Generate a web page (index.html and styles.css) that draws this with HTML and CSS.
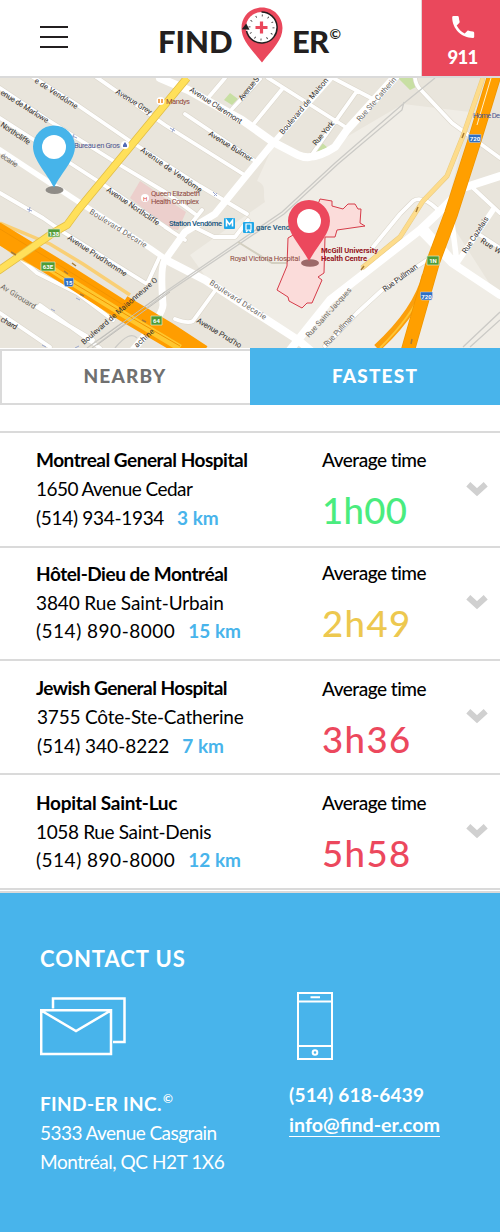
FILE: index.html
```html
<!DOCTYPE html>
<html lang="en">
<head>
<meta charset="utf-8">
<title>FIND-ER</title>
<meta name="viewport" content="width=device-width">
<link rel="stylesheet" href="styles.css">
</head>
<body>
<header class="header">
  <button class="menu" aria-label="Menu"><span></span><span></span><span></span></button>
  <div class="logo">
    <span class="logo-find">FIND</span>
    <svg class="logo-pin" width="42" height="56" viewBox="0 0 42 56">
      <path d="M21 .5C9.500.5.500 9.500.5 21c0 12 9 20 20.500 34.500C32.500 41 41.500 33 41.500 21 41.500 9.500 32.500.5 21 .5z" fill="#ea485c"/>
      <circle cx="20.500" cy="20.500" r="15.500" fill="#fff"/>
      <path d="M20.500 5a15.500 15.500 0 1 1-15 19" fill="none" stroke="#231f20" stroke-width="1.500"/>
      <path d="M.8 22.200 5.200 16.500l3.400 6.300z" fill="#231f20"/>
      <circle cx="20.500" cy="20.500" r="12" fill="none" stroke="#231f20" stroke-width="2" stroke-dasharray=".8 5.483"/>
      <path d="M20.500 14.500v12M14.500 20.500h12" stroke="#ea485c" stroke-width="3.200"/>
    </svg>
    <span class="logo-er">ER</span><span class="logo-copy">©</span>
  </div>
  <a class="emergency">
    <svg width="24" height="24" viewBox="0 0 24 24"><path d="M1.200 2.300Q1.200 1 2.500 1h4q1.200 0 1.300 1.200c.1 1.600.4 3 .8 4.400.2.600 0 1.100-.4 1.500L5.700 10.600c2 3.700 4.300 6 8 8l2.500-2.600c.4-.4.9-.5 1.500-.3 1.400.4 2.800.6 4.300.7q1.200.1 1.200 1.300v4q0 1.300-1.300 1.300C10.500 23 1.200 13.800 1.200 2.300z" fill="#fff"/></svg>
    <span>911</span>
  </a>
</header>

<svg class="map" width="500" height="270" viewBox="0 78 500 270">
  <rect y="78" width="500" height="270" fill="#e9e5dc"/>
  <path d="M273 146 312 161 350 135 403 104 470 112 445 214 500 300V348H310L215 290 190 255 265 202C262 192 268 186 257 181z" fill="#f0ede6"/>
  <path d="M140 181 130 198 168 228 178 230 186 212 165 198z" fill="#eccfcc"/>
  <path d="M230 93 238 99 232 105 224 100zM320 141 328 148 312 153zM398 78H413L418 86 410 90z" fill="#c8dfa3"/>

  <g class="road-edge">
    <path d="M25 72 76 104 130 141 200 186 247 214M92 74 165 125 243 174M0 88 48 120 120 165 165 192 195 214M0 118 70 163 107 187 170 230M0 193 43 218 63 232 147 284M185 114 255 161M225 78 208 98M232 109 260 79M268 78 347 128M283 88 252 126M333 78 373 99M357 91 313 153M415 78Q416 86 421 90L452 123 500 158M473 188 500 213M477 233 500 248M430 258 382 290 357 313 325 346M20 258 37 273 77 293 113 320M100 348 40 305M37 307 93 340M0 313 50 347M217 288 193 321Q188 324 175 319M400 214 413 201Q422 195 437 209M400 214 373 247M165 227 185 240M202 210 190 225 214 237H235L248 220M147 284 160 256"/>
  </g>
  <g class="road">
    <path d="M25 72 76 104 130 141 200 186 247 214M92 74 165 125 243 174M0 88 48 120 120 165 165 192 195 214M0 118 70 163 107 187 170 230M0 193 43 218 63 232 147 284M185 114 255 161M225 78 208 98M232 109 260 79M268 78 347 128M283 88 252 126M333 78 373 99M357 91 313 153M415 78Q416 86 421 90L452 123 500 158M473 188 500 213M477 233 500 248M430 258 382 290 357 313 325 346M20 258 37 273 77 293 113 320M100 348 40 305M37 307 93 340M0 313 50 347M217 288 193 321Q188 324 175 319M400 214 413 201Q422 195 437 209M400 214 373 247M165 227 185 240M202 210 190 225 214 237H235L248 220M147 284 160 256"/>
    <path class="w5" d="M0 150 50 183 88 208 150 248 170 262M427 230 458 265M452 223 457 263 493 210M330 79 273 143"/>
    <path class="w8" d="M160 78 188 90 242 120 273 142 298 155Q312 162 335 147L347 130 396 76M170 262 205 280 298 340 310 350M500 176 463 188 438 213 420 230 330 300 290 350M420 230 452 263 500 295"/>
    <path class="w7" d="M273 143 215 214 185 232 165 260Q160 266 163 305Q163 315 133 350"/>
  </g>

  <g class="rail"><path d="M87 348 165 292 282 212 335 163 403 104 435 78M92 348 168 292 284 214 338 164 402 110 404 102M463 347 500 312M470 347 500 320M115 348Q130 330 137 338"/></g>
  <path d="M238 242 272 263H302" fill="none" stroke="#d3cfc0" stroke-width="2"/>

  <g fill="none">
    <path d="M0 223 50 244 83 264 130 295M0 243 20 258 70 283 115 317" stroke="#f9cf75" stroke-width="3.500"/>
    <path d="M483 78 463 136 447 176 423 201 400 237 362 268" stroke="#eacb80" stroke-width="5"/>
    <path d="M483 78 463 136 447 176 423 201 400 237 362 268" stroke="#fddc8c" stroke-width="4"/>
    <path d="M426 275Q418 310 377 348" stroke="#fb9f0c" stroke-width="8"/>
    <path d="M422 290Q412 316 380 348" stroke="#ffc534" stroke-width="2"/>
    <path d="M-5 231 67 275 125 312 195 353" stroke="#ff9d00" stroke-width="20"/>
    <path d="M125 300 170 327 205 350" stroke="#ff9d00" stroke-width="9"/>
    <path d="M50 268 67 279 125 315 180 348" stroke="#ffc72e" stroke-width="7"/>
    <path d="M0 229 67 270 125 306M50 269 125 314 180 346" stroke="#f29400" stroke-width="1"/>
    <path d="M-2 271 53 233 67 225 78 210 187 78" stroke="#e1bd47" stroke-width="8"/>
    <path d="M-2 271 53 233 67 225 78 210 187 78" stroke="#ffe05a" stroke-width="6.500"/>
    <path d="M496 70 475 139 451 214 433 262 408 350" stroke="#ee9500" stroke-width="14"/>
    <path d="M496 70 475 139 451 214 433 262 408 350" stroke="#ff9f00" stroke-width="12.500"/>
    <path d="M491 78 477 125" stroke="#fff0c8" stroke-width="1"/>
  </g>
  <path class="rail-over" d="M100 339 165 292M97 345 170 292"/>
  <path class="campus" d="M288 238 287 266 277 290 288 297 289 301 302 308 307 303H312L322 280 318 277 324 273 325 237H335L337 230 365 226 360 223 361 209H358L355 204H348L343 209 332 206V201L320 199 310 225z"/>

  <g class="labels">
    <text transform="translate(34 82) rotate(33)" textLength="50">e de Vendôme</text>
    <text transform="translate(0 94) rotate(32)" textLength="55">enue de Marlowe</text>
    <text transform="translate(0 126) rotate(34)" textLength="34">Northcliffe</text>
    <text class="soft" transform="translate(0 157) rotate(34)" textLength="19">écarie</text>
    <text transform="translate(115 93) rotate(32)" textLength="41">Avenue Grey</text>
    <text transform="translate(189 91) rotate(33)" textLength="61">Avenue Claremont</text>
    <text transform="translate(208 135) rotate(32)" textLength="50">Avenue Bulmer</text>
    <text transform="translate(140 151) rotate(35)" textLength="73">Avenue de Vendôme</text>
    <text transform="translate(106 191) rotate(34)" textLength="62">Avenue Northcliffe</text>
    <text class="soft" transform="translate(89 213) rotate(32)" textLength="66">Boulevard Décarie</text>
    <text transform="translate(67 239) rotate(33)" textLength="69">Avenue Prud'homme</text>
    <text class="soft" transform="translate(0 288) rotate(32)" textLength="40">Av Girouard</text>
    <text transform="translate(0 321) rotate(30)" textLength="18">chard</text>
    <text transform="translate(84 345) rotate(-41)" textLength="98">Boulevard de Maisonneuve O</text>
    <text transform="translate(137 348) rotate(-42)" textLength="24">achine</text>
    <text class="soft" transform="translate(209 284) rotate(33)" textLength="66">Boulevard Décarie</text>
    <text transform="translate(196 322) rotate(31)" textLength="51">Avenue Prud'ho</text>
    <text transform="translate(242 101) rotate(-51)" textLength="28">Avenue S</text>
    <text transform="translate(283 135) rotate(-50)" textLength="71">Boulevard de Maison</text>
    <text transform="translate(316 146) rotate(-50)" textLength="29">Rue York</text>
    <text class="soft" transform="translate(360 122) rotate(-49)" textLength="56">Rue Ste-Catherin</text>
    <text transform="translate(466 254) rotate(-57)" textLength="42">Rue Cazelais</text>
    <text transform="translate(480 242) rotate(33)" textLength="23">Rue W</text>
    <text transform="translate(385 292) rotate(-36)" textLength="41">Rue Pullman</text>
    <text class="soft" transform="translate(309 338) rotate(-48)" textLength="64">Rue Saint-Jacques</text>
    <text class="soft" transform="translate(327 347) rotate(-47)" textLength="41">Rue Pullman</text>
    <g class="food"><circle cx="160.500" cy="101" r="4" fill="#fff" stroke="none"/><path d="M159 99v4M162 99v4" stroke="#ee8b27" stroke-width="1.500"/><text x="166" y="104" textLength="24">Mandys</text>
    <circle cx="145" cy="198" r="4" fill="#fff" stroke="none"/><text x="143" y="200.500" font-size="6" fill="#d44">H</text>
    <text x="151" y="196" textLength="49">Queen Elizabeth</text><text x="151" y="204" textLength="48">Health Complex</text>
    <text x="230" y="261" textLength="70">Royal Victoria Hospital</text></g>
    <g class="shop"><text x="74" y="148" textLength="46">Bureau en Gros</text><circle cx="125" cy="145" r="4" fill="#fff"/><path d="M123 147v-2l2-3 2 3v2z" fill="#536bb5"/><text x="473" y="118" textLength="27">Home De</text></g>
    <g class="station"><text x="169" y="226" textLength="53">Station Vendôme</text><text x="256" y="230" textLength="34">gare Vend</text></g>
    <rect x="224" y="218" width="11" height="11" rx="1" fill="#20a7e8"/><path d="M226.500 226.500v-6l3 4 3-4v6" fill="none" stroke="#fff" stroke-width="1.600"/>
    <rect x="243" y="222" width="11" height="11" rx="1" fill="#20a7e8"/><path d="M246 224h5v6h-5zM246 232l1.500-1.500M251 232l-1.500-1.500" fill="none" stroke="#fff" stroke-width="1.200"/>
    <g class="clinic"><text x="321" y="253" textLength="57">McGill University</text><text x="321" y="261" textLength="46">Health Centre</text></g>
  </g>
  <g class="shields">
    <path d="M48 229h12v8H48zM41 262h14v9H41zM151 316h11v9h-11zM427 256h12v9h-12z" fill="#4f9c36" stroke="#d8e8c8" stroke-width=".7"/>
    <path d="M64 278h9.500v6l-1 2.500h-7.500l-1-2.500zM468.500 134.500h12.500v5l-1 3h-10.500l-1-3zM420.500 292h12v5l-1 3h-10l-1-3z" fill="#2f6fc4" stroke="#c4d6ee" stroke-width=".5"/>
    <text x="54" y="235.500">138</text><text x="48" y="269">63E</text><text x="156.500" y="323">64</text><text x="433" y="263">1N</text><text x="69" y="284.500">15</text><text x="475" y="141">720</text><text x="426.500" y="298.500">720</text>
  </g>
  <g class="arrows"><path d="M72 136l5 2M74 134l-1 4M27 209l5 2M30 207l-1 5M170 128l5 3M174 128l-2 4M213 192l4 4M217 193l-3 3M76 298l4 2M51 309l4 2M42 345l4 2M75 348l4-2"/></g>
  <g class="lane-arrows"><path d="M11 252l5 3M72 263l4 3M64 271l4 3M80 294l4 2M142 320l4 2M462 138l2-5M416 212l2-5M361 270l3-4M411 344l1-5"/></g>

  <ellipse cx="54.500" cy="190" rx="9" ry="4" fill="#8f8c87"/>
  <path d="M54 187.500C46 172 33 160 33 146.500a21 21 0 0 1 42 0C75 160 62 172 54 187.500z" fill="#46b4ea"/>
  <circle cx="54" cy="147" r="12" fill="#fff"/>
  <ellipse cx="310" cy="263" rx="9" ry="3.800" fill="#9c6a69"/>
  <path d="M309 261C301 246 288 234 288 221a21 21 0 0 1 42 0C330 234 317 246 309 261z" fill="#ec485d"/>
  <circle cx="309" cy="221" r="12" fill="#fff"/>
</svg>

<nav class="tabs"><a class="tab tab-nearby"><span>NEARBY</span></a><a class="tab tab-fastest"><span>FASTEST</span></a></nav>

<main class="list">
  <article class="row row-1">
    <div class="info"><h2 class="n1">Montreal General Hospital</h2><p class="a1">1650 Avenue Cedar</p><p class="phone"><span class="p1">(514) 934-1934</span><b>3 km</b></p></div>
    <div class="wait"><p>Average time</p><strong class="green">1h00</strong></div>
    <svg class="chev" width="22" height="15" viewBox="0 0 22 15"><path d="M2.300 2.300 11 10.200 19.700 2.300"/></svg>
  </article>
  <article class="row row-2">
    <div class="info"><h2 class="n2">Hôtel-Dieu de Montréal</h2><p class="a2">3840 Rue Saint-Urbain</p><p class="phone"><span class="p2">(514) 890-8000</span><b>15 km</b></p></div>
    <div class="wait"><p>Average time</p><strong class="yellow">2h49</strong></div>
    <svg class="chev" width="22" height="15" viewBox="0 0 22 15"><path d="M2.300 2.300 11 10.200 19.700 2.300"/></svg>
  </article>
  <article class="row row-3">
    <div class="info"><h2 class="n3">Jewish General Hospital</h2><p class="a3">3755 Côte-Ste-Catherine</p><p class="phone"><span class="p3">(514) 340-8222</span><b>7 km</b></p></div>
    <div class="wait"><p>Average time</p><strong class="red">3h36</strong></div>
    <svg class="chev" width="22" height="15" viewBox="0 0 22 15"><path d="M2.300 2.300 11 10.200 19.700 2.300"/></svg>
  </article>
  <article class="row row-4">
    <div class="info"><h2 class="n4">Hopital Saint-Luc</h2><p class="a4">1058 Rue Saint-Denis</p><p class="phone"><span class="p2">(514) 890-8000</span><b>12 km</b></p></div>
    <div class="wait"><p>Average time</p><strong class="red">5h58</strong></div>
    <svg class="chev" width="22" height="15" viewBox="0 0 22 15"><path d="M2.300 2.300 11 10.200 19.700 2.300"/></svg>
  </article>
</main>

<footer class="footer">
  <section class="address">
    <h3>CONTACT US</h3>
    <svg class="mail" width="87" height="59" viewBox="0 0 87 59" fill="none" stroke="#fff" stroke-width="2.500"><path d="M13 11.500V1.500H84.500V45H73M1.200 13.200H71V57H1.200zM2 14 36 34 70 14"/></svg>
    <p class="company">FIND-ER INC.<sup>©</sup></p>
    <p class="street">5333 Avenue Casgrain</p>
    <p class="city">Montréal, QC H2T 1X6</p>
  </section>
  <section class="direct">
    <svg class="mobile" width="36" height="68" viewBox="0 0 36 68" fill="none" stroke="#fff" stroke-width="2"><path d="M1 1H35V67H1zM1 9.500H35M1 54H35M13.500 5.300H23"/><circle cx="18" cy="60.500" r="2.300"/></svg>
    <p class="tel">(514) 618-6439</p>
    <p><a class="email">info@find-er.com</a></p>
  </section>
</footer>
</body>
</html>
```
FILE: styles.css
```css
* { box-sizing: border-box; margin: 0; padding: 0; }
body { width: 500px; background: #fff; font-family: Lato, "Liberation Sans", sans-serif; color: #000; font-size: 19px; }

.header { display: flex; height: 78px; border-bottom: 2px solid #dadada; }
.menu { display: flex; flex-direction: column; gap: 8px; width: 28px; margin: 26px 0 0 40px; border: 0; background: none; }
.menu span { height: 2px; background: #231f20; }
.logo { display: flex; margin-left: 89px; color: #231f20; font-weight: 900; font-size: 31px; line-height: 40px; width: 264px; }
.logo-find { width: 84px; padding: 21px 0 0 1px; letter-spacing: 0; }
.logo-pin { margin-top: 7px; flex: none; }
.logo-er { padding: 21px 0 0 9px; letter-spacing: -0.7px; }
.logo-copy { font-size: 14px; font-weight: 700; padding-top: 14px; margin-left: 1px; }
.emergency { width: 79px; height: 76px; border-left: 1px solid #e3d5d7; background: #ea485c; color: #fff; display: flex; flex-direction: column; align-items: center; font-weight: 900; padding: 15px 0 0 3px; line-height: 36px; }
.emergency svg { flex: none; }
.emergency span { line-height: 20px; margin-top: 8px; font-size: 18.5px; letter-spacing: -0.8px; }

.map { display: block; }
.road-edge, .road { fill: none; stroke-linejoin: round; stroke-linecap: round; }
.road-edge { stroke: #dcd7cc; stroke-width: 5; }
.road { stroke: #fff; stroke-width: 3.8; }
.w5 { stroke-width: 5.5; }
.w7 { stroke-width: 7; }
.w8 { stroke-width: 8; }
.rail { fill: none; stroke: #cbcac6; stroke-width: 1.3; }
.rail-over { fill: none; stroke: #c0beb9; stroke-width: 1; }
.campus { fill: #fbdcda; stroke: #d63c49; stroke-width: 1; }
.labels { font: 400 7.6px Roboto, sans-serif; fill: #33312f; stroke: none; }
.soft { fill: #6b675f; }
.food { fill: #8f4a3f; }
.shop { fill: #4d5590; }
.station { fill: #17567e; font-weight: 500; }
.clinic { fill: #951522; font-weight: 700; }
.shields { font: 700 6px Roboto, sans-serif; fill: #fff; text-anchor: middle; }
.arrows { stroke: #99a6cf; fill: none; }
.lane-arrows { stroke: #a87b35; stroke-width: 1.5; }

.tabs { display: flex; height: 57px; }
.tab { width: 250px; text-align: center; font-weight: 900; font-size: 19px; line-height: 56px; letter-spacing: 1.2px; }
.tab-nearby { border: 2px solid #dadada; border-right: 0; line-height: 50px; color: #707070; margin-top: 1px; height: 56px; padding-right: 2px; }
.tab-fastest { background: #48b4eb; color: #fff; }

.list { padding-top: 26px; border-bottom: 2px solid #dadada; height: 488px; }
.row { display: flex; border-top: 2px solid #dadada; height: 115px; }
.row-2 { height: 113px; }
.row-3 { height: 114px; }
.row-4 { height: 117px; border-bottom: 2px solid #dadada; }
.info { width: 322px; padding: 12px 0 0 36px; line-height: 29px; white-space: nowrap; }
.info h2 { font-size: 19px; font-weight: 700; }
.info p { font-weight: 400; }
.phone b { color: #48b4eb; margin-left: 13px; letter-spacing: 0; }
.row-2 .info { padding-top: 11px; }
.row-4 .info { padding-top: 13px; }
.row-2 .phone, .row-4 .phone { line-height: 27px; }
.info .n1 { letter-spacing: -.48px; }
.info .n2 { letter-spacing: -.46px; }
.info .n3 { letter-spacing: -.52px; }
.info .n4 { letter-spacing: -.27px; }
.a1 { letter-spacing: -.55px; }
.a2 { letter-spacing: -.12px; }
.a3 { letter-spacing: -.2px; padding-left: 1px; }
.a4 { letter-spacing: -.35px; }
.p1 { letter-spacing: -.3px; }
.p2 { letter-spacing: .5px; }
.p3 { letter-spacing: 0; padding-left: 1px; }
.wait { width: 144px; padding-top: 12px; line-height: 29px; }
.row-2 .wait { padding-top: 10px; }
.row-3 .wait, .row-4 .wait { padding-top: 13px; }
.wait p { font-weight: 500; letter-spacing: -.5px; }
.wait strong { display: block; font-size: 36.500px; font-weight: 500; line-height: 58px; margin-top: 7px; letter-spacing: 1.400px; }
.wait .green { color: #4aec7e; letter-spacing: .3px; }
.yellow { color: #edc84f; }
.red { color: #ec485d; }
.chev { margin-top: 49px; fill: none; stroke: #d0d0d0; stroke-width: 6; }
.row-2 .chev { margin-top: 47px; }
.row-3 .chev { margin-top: 48px; }

.footer { display: flex; height: 339px; background: #48b4eb; color: #fff; line-height: 29px; }
.address { width: 289px; padding: 51px 0 0 40px; }
.address h3 { font-size: 22px; font-weight: 700; line-height: 30px; letter-spacing: .95px; }
.mail { display: block; margin-top: 23px; }
.company { margin-top: 33px; font-weight: 700; letter-spacing: .35px; }
.company sup { font-size: 12px; line-height: 0; vertical-align: 8px; margin-left: 1px; }
.street { font-weight: 400; letter-spacing: -.55px; }
.city { font-weight: 400; letter-spacing: -.45px; }
.direct { padding-top: 99px; }
.mobile { display: block; margin-left: 8px; }
.tel { margin-top: 20px; font-weight: 700; line-height: 30px; letter-spacing: .2px; }
.email { font-size: 19.7px; font-weight: 700; border-bottom: 1px solid #fff; }
```
